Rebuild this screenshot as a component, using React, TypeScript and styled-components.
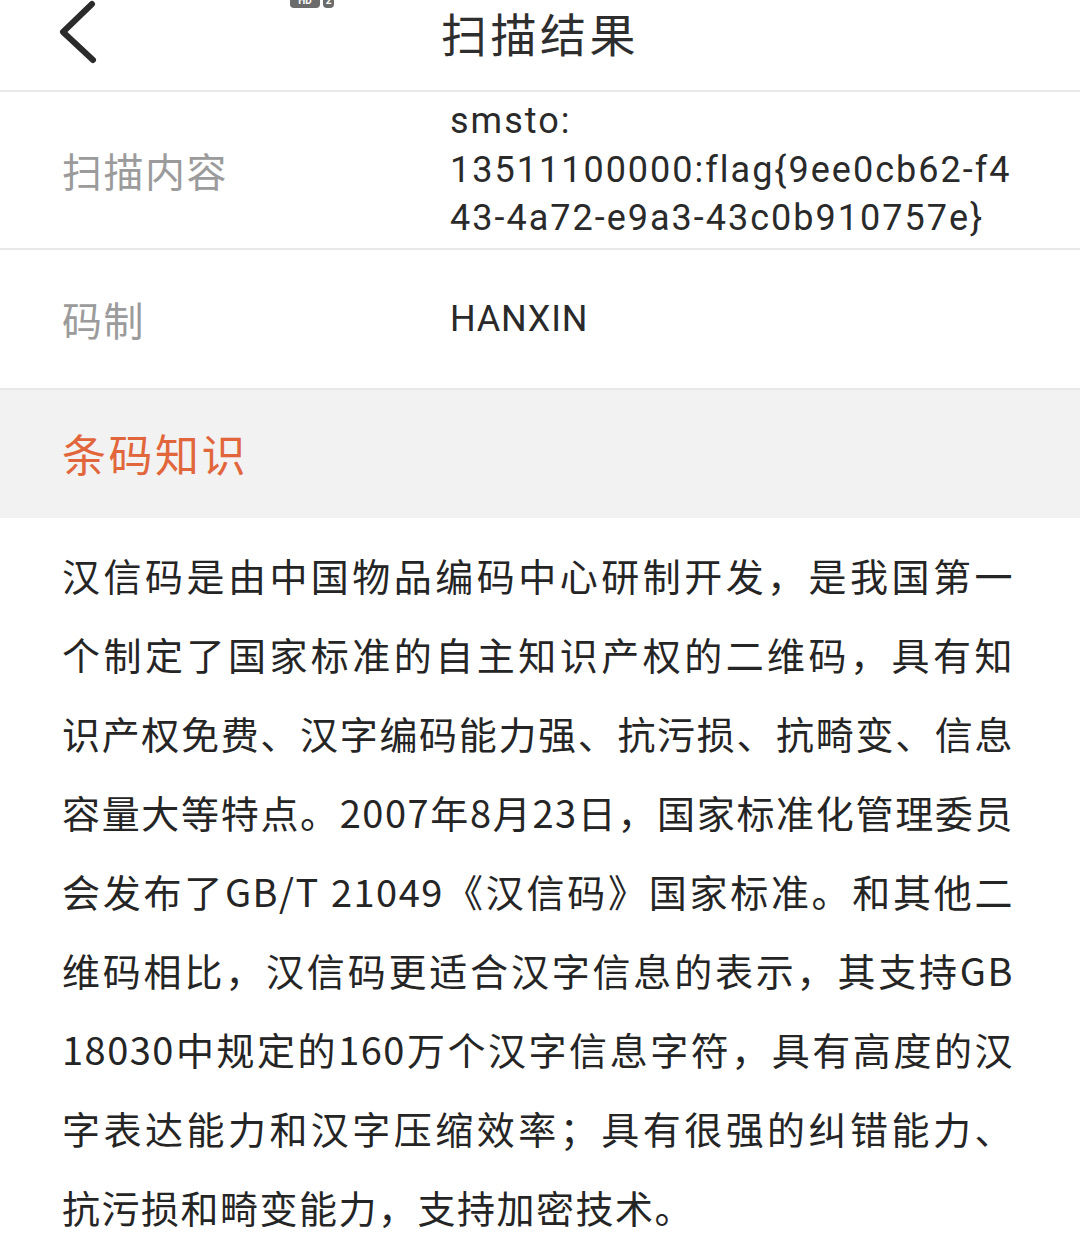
import React from "react";
import styled, { createGlobalStyle } from "styled-components";

const Global = createGlobalStyle`
  html, body { margin: 0; padding: 0; background: #ffffff; }
  body { font-family: Roboto, "Noto Sans CJK SC", sans-serif; overflow: hidden; }
  *, *::before, *::after { box-sizing: border-box; }
`;

const Page = styled.div`
  width: 1080px;
  min-height: 1251px;
  background: #ffffff;
  display: flex;
  flex-direction: column;
`;

const Header = styled.header`
  position: relative;
  height: 92px;
  padding: 0 0 26px 0;
  display: grid;
  grid-template-columns: 1fr auto 1fr;
  align-items: center;
  border-bottom: 2px solid #e9e9e9;
`;

const BackButton = styled.button`
  justify-self: start;
  margin-left: 58px;
  padding: 0;
  border: none;
  background: none;
  width: 40px;
  height: 64px;
  display: flex;
  align-items: center;
  justify-content: center;
`;

const Title = styled.h1`
  margin: 0;
  font-family: "Noto Sans CJK SC", sans-serif;
  font-weight: 400;
  font-size: 46px;
  letter-spacing: 3.5px;
  color: #2e2e2e;
  line-height: 1;
`;

const StatusBadges = styled.div`
  position: absolute;
  left: 290px;
  top: -6px;
  display: flex;
  gap: 3px;
  align-items: flex-start;
`;

const Badge = styled.span<{ $w: number }>`
  width: ${(p) => p.$w}px;
  height: 14px;
  border-radius: 4px;
  background: #6b6b6b;
  color: #ffffff;
  font-family: Roboto, sans-serif;
  font-size: 10px;
  font-weight: 700;
  line-height: 14px;
  text-align: center;
`;

const InfoRow = styled.div<{ $h: number }>`
  display: grid;
  grid-template-columns: 388px 1fr;
  padding-left: 62px;
  min-height: ${(p) => p.$h}px;
  align-items: center;
  border-bottom: 2px solid #e8e8e8;
`;

const Label = styled.div`
  font-family: "Noto Sans CJK SC", sans-serif;
  font-size: 40px;
  letter-spacing: 1.5px;
  color: #9b9b9b;
  line-height: 1;
`;

const Value = styled.div<{ $spacing?: number }>`
  font-family: Roboto, "Noto Sans CJK SC", sans-serif;
  font-size: 36px;
  letter-spacing: ${(p) => p.$spacing ?? 2}px;
  color: #2a2a2a;
  line-height: 48.5px;
  white-space: nowrap;
`;

const ValueLine = styled.span`
  display: block;
`;

const Section = styled.div`
  height: 128px;
  background: #f2f2f2;
  display: flex;
  align-items: center;
  padding-left: 62px;
  padding-bottom: 2px;
`;

const SectionTitle = styled.h2`
  margin: 0;
  font-family: "Noto Sans CJK SC", sans-serif;
  font-weight: 400;
  font-size: 44px;
  letter-spacing: 2.5px;
  color: #e2663c;
  line-height: 1;
`;

const Body = styled.div`
  padding: 17px 66px 0 62px;
  font-family: "Noto Sans CJK SC", Roboto, sans-serif;
  font-size: 38px;
  letter-spacing: 1.5px;
  line-height: 79px;
  color: #252525;
`;

const BodyLine = styled.span<{ $last?: boolean }>`
  display: block;
  white-space: nowrap;
  text-align: ${(p) => (p.$last ? "left" : "justify")};
  text-align-last: ${(p) => (p.$last ? "left" : "justify")};
`;

const lines = [
  "汉信码是由中国物品编码中心研制开发，是我国第一",
  "个制定了国家标准的自主知识产权的二维码，具有知",
  "识产权免费、汉字编码能力强、抗污损、抗畸变、信息",
  "容量大等特点。2007年8月23日，国家标准化管理委员",
  "会发布了GB/T 21049《汉信码》国家标准。和其他二",
  "维码相比，汉信码更适合汉字信息的表示，其支持GB",
  "18030中规定的160万个汉字信息字符，具有高度的汉",
  "字表达能力和汉字压缩效率；具有很强的纠错能力、",
  "抗污损和畸变能力，支持加密技术。",
];

export default function App() {
  return (
    <Page>
      <Global />
      <Header>
        <BackButton aria-label="返回">
          <svg width="40" height="64" viewBox="0 0 40 64">
            <path
              d="M34 4 L5 32 L35 60"
              fill="none"
              stroke="#2b2b2b"
              strokeWidth="6"
              strokeLinecap="round"
              strokeLinejoin="round"
            />
          </svg>
        </BackButton>
        <Title>扫描结果</Title>
        <div />
        <StatusBadges>
          <Badge $w={30}>HD</Badge>
          <Badge $w={11}>2</Badge>
        </StatusBadges>
      </Header>
      <InfoRow $h={158}>
        <Label>扫描内容</Label>
        <Value>
          <ValueLine>smsto:</ValueLine>
          <ValueLine>13511100000:flag{"{"}9ee0cb62-f4</ValueLine>
          <ValueLine>43-4a72-e9a3-43c0b910757e{"}"}</ValueLine>
        </Value>
      </InfoRow>
      <InfoRow $h={140}>
        <Label>码制</Label>
        <Value $spacing={0.8}>HANXIN</Value>
      </InfoRow>
      <Section>
        <SectionTitle>条码知识</SectionTitle>
      </Section>
      <Body>
        {lines.map((l, i) => (
          <BodyLine key={i} $last={i === lines.length - 1}>
            {l}
          </BodyLine>
        ))}
      </Body>
    </Page>
  );
}
